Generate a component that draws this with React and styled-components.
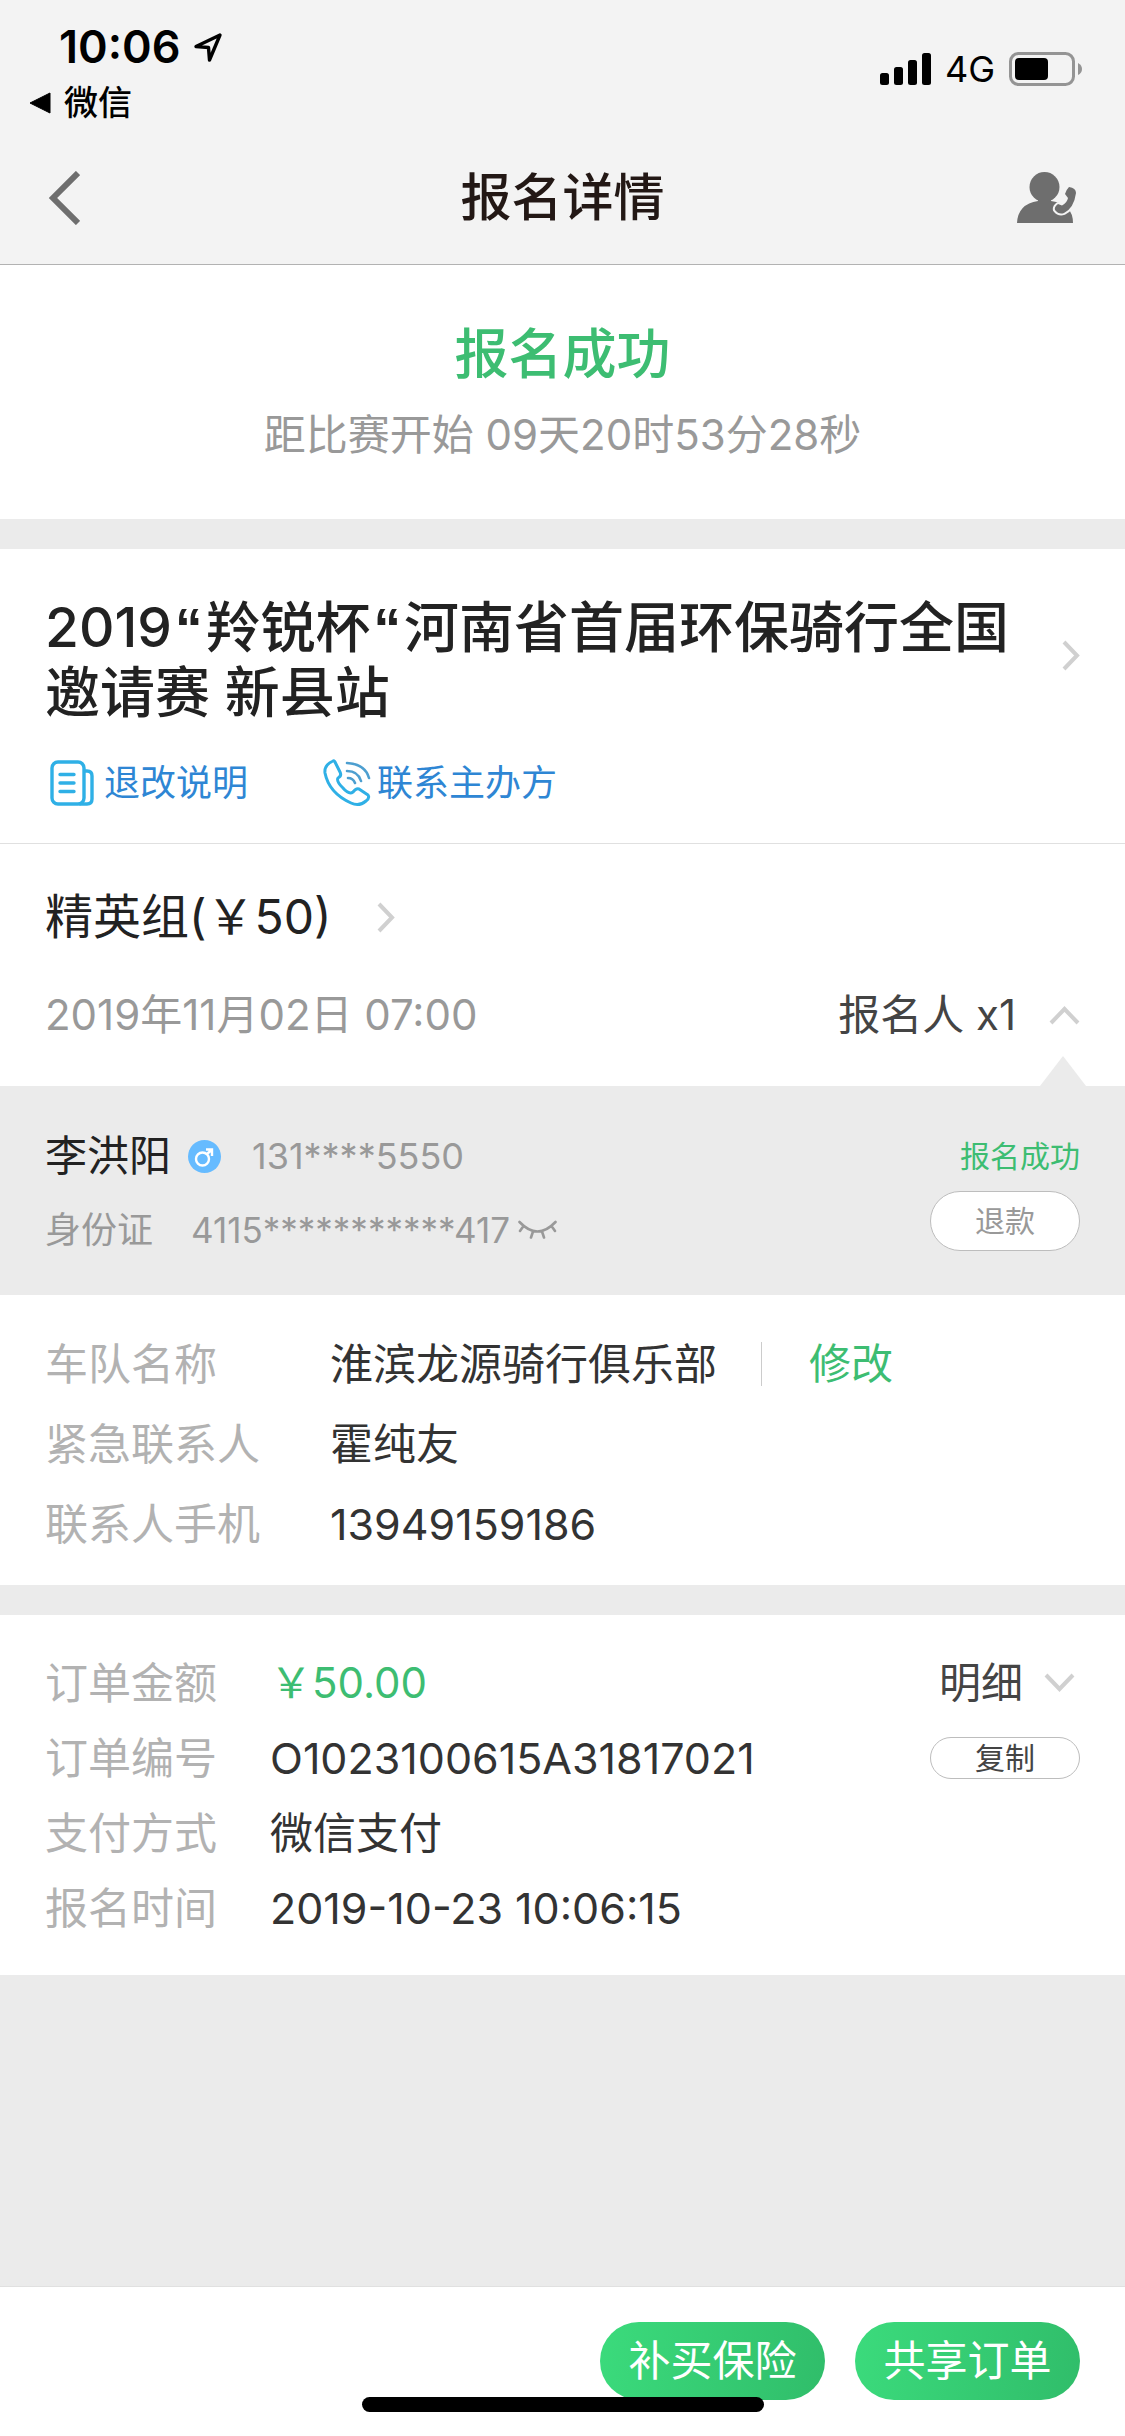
import styled, { createGlobalStyle } from 'styled-components';

const GlobalStyle = createGlobalStyle`
  * {
    box-sizing: border-box;
  }
  body {
    margin: 0;
    background: #ebebeb;
    font-family: Inter, 'Noto Sans CJK SC', sans-serif;
    font-size: 43px;
    line-height: 60px;
    color: #333;
  }
  h1, h2, p, dl, dd {
    margin: 0;
    font-weight: 400;
  }
  a {
    color: inherit;
    text-decoration: none;
  }
  button {
    padding: 0;
    border: 0;
    background: none;
    color: inherit;
    font: inherit;
    cursor: pointer;
  }
  svg {
    display: block;
    flex: none;
  }
`;

const Page = styled.div`
  min-height: 100vh;
  display: flex;
  flex-direction: column;
`;

//# 状态栏 + 导航栏
const Header = styled.header`
  background: #f3f3f3;
  border-bottom: 1px solid #b2b2b2;
  color: #000;
`;

const StatusBar = styled.div`
  height: 132px;
  padding: 20px 43px 0 29px;
  display: flex;
  justify-content: space-between;
`;

const Clock = styled.div`
  padding-left: 30px;
  display: flex;
  align-items: center;
  gap: 12px;
  height: 54px;
  font-size: 45px;
  font-weight: 600;
`;

const BackToApp = styled.a`
  display: flex;
  align-items: center;
  gap: 13px;
  height: 58px;
  font-size: 34px;
  font-weight: 500;
`;

const Signals = styled.div`
  display: flex;
  align-items: center;
  gap: 14px;
  height: 98px;
  font-size: 36px;
`;

const NavBar = styled.nav`
  height: 132px;
  padding: 0 48px;
  display: grid;
  grid-template-columns: 1fr auto 1fr;
  align-items: center;
  color: #6e6e6e;
`;

const NavTitle = styled.h1`
  font-size: 51px;
  font-weight: 500;
  color: #231815;
`;

const NavButton = styled.button`
  justify-self: ${(props) => (props.$end ? 'end' : 'start')};
`;

//# 白色区块
const Section = styled.section`
  background: #fff;
  padding: ${(props) => props.$pad};
  margin-bottom: ${(props) => (props.$gap ? '30px' : 0)};
  border-bottom: ${(props) => (props.$line ? '1px solid #e0e0e0' : 0)};
`;

const Row = styled.div`
  display: flex;
  align-items: center;
  justify-content: ${(props) => (props.$between ? 'space-between' : 'flex-start')};
`;

const ResultTitle = styled.h2`
  font-size: 54px;
  font-weight: 500;
  line-height: 75px;
  text-align: center;
  color: #3dbd72;
`;

const Countdown = styled.p`
  margin-top: 13px;
  text-align: center;
  font-size: 42px;
  color: #999;
`;

const EventLink = styled.a`
  display: flex;
  align-items: center;
  justify-content: space-between;
  gap: 40px;

  svg {
    margin-bottom: 10px;
  }
`;

const EventTitle = styled.h2`
  font-size: 55px;
  font-weight: 500;
  line-height: 65px;
  color: #222;
`;

const Quote = styled.span`
  padding: 0 3px;
  font-family: 'Liberation Sans', sans-serif;
  font-weight: 700;
  line-height: 1;
`;

const Actions = styled.div`
  margin-top: 28px;
  display: flex;
  gap: 75px;
`;

const ActionLink = styled.a`
  display: flex;
  align-items: center;
  gap: 6px;
  font-size: 36px;
  color: #2e86d4;
`;

const GroupLink = styled.a`
  display: inline-flex;
  align-items: center;
  gap: 46px;
  margin-bottom: 38px;
  font-size: 48px;
  color: #222;
`;

const Time = styled.time`
  font-size: 42px;
  color: #999;
`;

const Toggle = styled.button`
  display: flex;
  align-items: center;
  gap: ${(props) => props.$gap};
  padding-right: ${(props) => props.$inset || 0};
  font-size: 42px;
  color: #444;
`;

//# 报名人
const Attendee = styled.section`
  position: relative;
  display: flex;
  justify-content: space-between;
  padding: 40px 45px 35px;
  color: #999;
  font-size: 36px;

  &::before {
    content: '';
    position: absolute;
    right: 39px;
    bottom: 100%;
    border: solid transparent;
    border-width: 0 23px 30px;
    border-bottom-color: #ebebeb;
  }
`;

const AttendeeInfo = styled.div`
  display: flex;
  flex-direction: column;
  gap: 14px;
`;

const AttendeeState = styled.div`
  display: flex;
  flex-direction: column;
  align-items: flex-end;
  gap: 5px;
  font-size: 30px;
  color: #3dbd72;
`;

const Name = styled.strong`
  font-size: 42px;
  font-weight: 400;
  color: #222;
  margin-right: 17px;
`;

const Phone = styled.span`
  margin-left: 31px;
`;

const IdNumber = styled.span`
  margin-left: 38px;
  font-size: 35px;
`;

const EyeButton = styled.button`
  margin-left: 8px;
`;

const PillButton = styled.button`
  width: 150px;
  height: ${(props) => props.$height};
  border: 1px solid #bdbdbd;
  border-radius: 30px;
  background: #fff;
  color: ${(props) => props.$color};
  font-size: 30px;
  line-height: 30px;
`;

//# 字段列表
const Fields = styled.dl`
  display: flex;
  flex-direction: column;
`;

const Field = styled.div`
  display: flex;
  align-items: center;
  height: ${(props) => props.$height};

  dt {
    width: ${(props) => props.$label};
    color: #b2b2b2;
  }
  dd {
    flex: 1;
    display: flex;
    align-items: center;
    justify-content: ${(props) => (props.$between ? 'space-between' : 'flex-start')};
  }
`;

const Edit = styled.button`
  margin-left: 44px;
  padding-left: 47px;
  border-left: 1px solid #ccc;
  line-height: 44px;
  font-size: 42px;
  color: #3dbd72;
`;

const Price = styled.span`
  font-size: 42px;
  color: #3dbd72;
`;

//# 底部操作栏
const Footer = styled.footer`
  position: relative;
  margin-top: auto;
  height: 150px;
  padding: 35px 45px 0;
  display: flex;
  justify-content: flex-end;
  gap: 30px;
  background: #fff;
  border-top: 1px solid #e0e0e0;
`;

const MainButton = styled.button`
  width: 225px;
  height: 78px;
  border-radius: 39px;
  background: linear-gradient(100deg, #3bdb7c, #30bd6a);
  font-size: 42px;
  color: #fff;
`;

const HomeIndicator = styled.div`
  position: absolute;
  left: 50%;
  bottom: 24px;
  width: 402px;
  height: 15px;
  border-radius: 8px;
  background: #000;
  transform: translateX(-50%);
`;

const chevrons = {
  left: { w: 32, h: 54, d: 'M30 2 L5 27 L30 52', s: 6 },
  right: { w: 18, h: 31, d: 'M2 2 L15 15.5 L2 29', s: 4 },
  up: { w: 31, h: 19, d: 'M2 17 L15.5 3 L29 17', s: 4 },
  down: { w: 31, h: 19, d: 'M2 2 L15.5 16 L29 2', s: 4 },
};

const Chevron = ({ to, color = '#d0d0d0' }) => {
  const { w, h, d, s } = chevrons[to];
  return (
    <svg width={w} height={h} viewBox={`0 0 ${w} ${h}`} fill="none" stroke={color} strokeWidth={s}>
      <path d={d} />
    </svg>
  );
};

const LocationIcon = () => (
  <svg width="30" height="31" viewBox="0 0 30 31" fill="none" stroke="#000" strokeWidth="3.4" strokeLinejoin="round">
    <path d="M27 3 L3 14.5 L15.5 15.5 L16.5 28 Z" />
  </svg>
);

const SignalIcon = () => (
  <svg width="51" height="32" viewBox="0 0 51 32">
    <rect x="0" y="20" width="9" height="12" rx="2.5" />
    <rect x="14" y="14" width="9" height="18" rx="2.5" />
    <rect x="28" y="7" width="9" height="25" rx="2.5" />
    <rect x="42" y="0" width="9" height="32" rx="2.5" />
  </svg>
);

const BatteryIcon = () => (
  <svg width="73" height="34" viewBox="0 0 73 34">
    <rect x="1.5" y="1.5" width="63" height="31" rx="8" fill="none" stroke="#949494" strokeWidth="3" />
    <rect x="6" y="6" width="33" height="22" rx="4" />
    <path d="M69 11 Q73 13 73 17 Q73 21 69 23 Z" fill="#949494" />
  </svg>
);

const ContactIcon = () => (
  <svg width="60" height="52" viewBox="0 0 60 52" fill="#6e6e6e">
    <ellipse cx="27.5" cy="15" rx="15" ry="15" />
    <path d="M21 26 h13 v3 Q56 32 56 51 H0 Q1 32 21 29 Z" />
    <path
      d="M52 15 Q59 16 59 21 Q57 36 47 41 Q42 43 38 38 Q37 35 41 32 L45 33.5 Q50 31 51 26 L48 22 Q49 18 52 15 Z"
      stroke="#f3f3f3"
      strokeWidth="4"
      strokeLinejoin="round"
      paintOrder="stroke"
    />
  </svg>
);

const DocIcon = () => (
  <svg width="53" height="46" viewBox="-5 0 53 46" fill="none" stroke="#2fb0e6" strokeWidth="3.4" strokeLinecap="round">
    <rect x="2" y="2" width="32" height="42" rx="6" />
    <path d="M35 11 h2 q5 0 5 5 v23 q0 5 -5 5 h-7" />
    <path d="M10 14.5 h14 M10 23 h14 M10 31.5 h14" />
  </svg>
);

const CallIcon = () => (
  <svg width="48" height="48" viewBox="0 0 48 48" fill="none" stroke="#2fb0e6" strokeWidth="3" strokeLinecap="round" strokeLinejoin="round">
    <path d="M10 2 Q1 6 2 14 Q6 34 28 44 Q36 48 43 42 Q47 39 45 36 L36 30 Q33 29 30 33 Q26 36 20 29 Q13 22 15 19 Q19 17 17 13 L12 3 Q11 1 10 2 Z" />
    <path d="M24 4 Q42 5 46 19 M24 12 Q35 12 38 22 M25 19 Q30 19 32 24" stroke="#4d9fd0" strokeWidth="2.6" />
  </svg>
);

const MaleIcon = () => (
  <svg width="33" height="33" viewBox="0 0 33 33">
    <circle cx="16.5" cy="16.5" r="16.5" fill="#66bbff" />
    <g fill="none" stroke="#fff" strokeWidth="2.4">
      <circle cx="14.5" cy="19" r="6.5" />
      <path d="M19 14 L24 9.5 M18 9.5 H24 V16" />
    </g>
  </svg>
);

const EyeClosedIcon = () => (
  <svg width="39" height="20" viewBox="0 0 39 20" fill="none" stroke="#999" strokeWidth="2.6" strokeLinecap="round">
    <path d="M1.5 2 Q19.5 21 37.5 2 M5.5 6 L2 11 M15 11.5 L13 17.5 M24 11.5 L26 17.5 M33.5 6 L37 11" />
  </svg>
);

export default function App() {
  return (
    <Page>
      <GlobalStyle />
      <Header>
        <StatusBar>
          <div>
            <Clock>
              10:06
              <LocationIcon />
            </Clock>
            <BackToApp href="#">
              <svg width="22" height="22" viewBox="0 0 22 22">
                <path d="M1 11 L21 1 V21 Z" stroke="#000" strokeLinejoin="round" />
              </svg>
              微信
            </BackToApp>
          </div>
          <Signals>
            <SignalIcon />
            4G
            <BatteryIcon />
          </Signals>
        </StatusBar>
        <NavBar>
          <NavButton aria-label="返回">
            <Chevron to="left" color="#6e6e6e" />
          </NavButton>
          <NavTitle>报名详情</NavTitle>
          <NavButton $end aria-label="联系人">
            <ContactIcon />
          </NavButton>
        </NavBar>
      </Header>

      <Section $pad="52px 45px 54px" $gap>
        <ResultTitle>报名成功</ResultTitle>
        <Countdown>距比赛开始 09天20时53分28秒</Countdown>
      </Section>

      <Section $pad="46px 45px 30px" $line>
        <EventLink href="#">
          <EventTitle>
            2019<Quote>“</Quote>羚锐杯<Quote>“</Quote>河南省首届环保骑行全国
            <br />
            邀请赛 新县站
          </EventTitle>
          <Chevron to="right" />
        </EventLink>
        <Actions>
          <ActionLink href="#">
            <DocIcon />
            退改说明
          </ActionLink>
          <ActionLink href="#">
            <CallIcon />
            联系主办方
          </ActionLink>
        </Actions>
      </Section>

      <Section $pad="43px 45px 41px">
        <GroupLink href="#">
          精英组(￥50)
          <Chevron to="right" />
        </GroupLink>
        <Row $between>
          <Time>2019年11月02日 07:00</Time>
          <Toggle $gap="33px">
            报名人 x1
            <Chevron to="up" />
          </Toggle>
        </Row>
      </Section>

      <Attendee>
        <AttendeeInfo>
          <Row>
            <Name>李洪阳</Name>
            <MaleIcon />
            <Phone>131****5550</Phone>
          </Row>
          <Row>
            身份证
            <IdNumber>4115***********417</IdNumber>
            <EyeButton aria-label="显示证件号">
              <EyeClosedIcon />
            </EyeButton>
          </Row>
        </AttendeeInfo>
        <AttendeeState>
          报名成功
          <PillButton $height="60px" $color="#999">
            退款
          </PillButton>
        </AttendeeState>
      </Attendee>

      <Section $pad="29px 45px 21px" $gap>
        <Fields>
          <Field $height="80px" $label="285px">
            <dt>车队名称</dt>
            <dd>
              淮滨龙源骑行俱乐部
              <Edit>修改</Edit>
            </dd>
          </Field>
          <Field $height="80px" $label="285px">
            <dt>紧急联系人</dt>
            <dd>霍纯友</dd>
          </Field>
          <Field $height="80px" $label="285px">
            <dt>联系人手机</dt>
            <dd>13949159186</dd>
          </Field>
        </Fields>
      </Section>

      <Section $pad="30px 45px">
        <Fields>
          <Field $height="75px" $label="225px" $between>
            <dt>订单金额</dt>
            <dd>
              <Price>￥50.00</Price>
              <Toggle $gap="21px" $inset="5px">
                明细
                <Chevron to="down" />
              </Toggle>
            </dd>
          </Field>
          <Field $height="75px" $label="225px" $between>
            <dt>订单编号</dt>
            <dd>
              O1023100615A31817021
              <PillButton $height="42px" $color="#444">
                复制
              </PillButton>
            </dd>
          </Field>
          <Field $height="75px" $label="225px">
            <dt>支付方式</dt>
            <dd>微信支付</dd>
          </Field>
          <Field $height="75px" $label="225px">
            <dt>报名时间</dt>
            <dd>2019-10-23 10:06:15</dd>
          </Field>
        </Fields>
      </Section>

      <Footer>
        <MainButton>补买保险</MainButton>
        <MainButton>共享订单</MainButton>
        <HomeIndicator />
      </Footer>
    </Page>
  );
}
